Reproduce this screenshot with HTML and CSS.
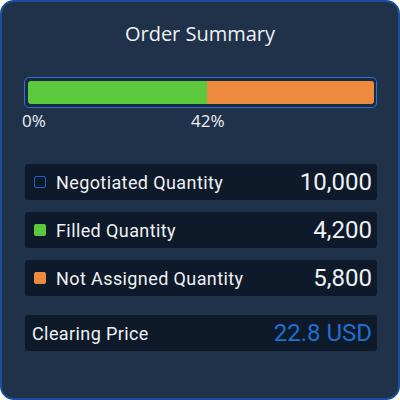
FILE: index.html
```html
<!DOCTYPE html>
<html lang="en">
<head>
    <meta charset="UTF-8">
    <meta name="viewport" content="width=device-width, initial-scale=1.0">
    <title>Order Summary</title>
    <link rel="stylesheet" href="styles.css">
</head>
<body>
    <div class="card">
        <h2 class="title">Order Summary</h2>

        <div class="bar">
            <div class="bar-filled" style="width: 51.7%;"></div>
            <div class="bar-rest"></div>
        </div>
        <div class="bar-labels">
            <span class="bar-label">0%</span>
            <span class="bar-label mark" style="left: 169px;">42%</span>
        </div>

        <div class="rows">
            <div class="row">
                <span class="swatch outline"></span>
                <span class="row-name">Negotiated Quantity</span>
                <span class="row-value">10,000</span>
            </div>
            <div class="row">
                <span class="swatch green"></span>
                <span class="row-name">Filled Quantity</span>
                <span class="row-value">4,200</span>
            </div>
            <div class="row">
                <span class="swatch orange"></span>
                <span class="row-name">Not Assigned Quantity</span>
                <span class="row-value">5,800</span>
            </div>
            <div class="row price">
                <span class="row-name">Clearing Price</span>
                <span class="row-value">22.8 USD</span>
            </div>
        </div>
    </div>
</body>
</html>
```

FILE: styles.css
```css
body {
    margin: 0;
    background: #ffffff;
    font-family: Roboto, "Liberation Sans", sans-serif;
}
.card {
    width: 400px;
    height: 400px;
    box-sizing: border-box;
    border: 2px solid #1a4d9b;
    border-radius: 14px;
    background-color: #1f3249;
    color: #eef1f5;
}
.title {
    margin: 18px 0 0;
    font-family: "Open Sans", Lato, sans-serif;
    font-weight: 400;
    font-size: 20px;
    line-height: 28px;
    text-align: center;
}
.bar {
    display: flex;
    height: 31px;
    box-sizing: border-box;
    margin: 29px 21px 0 22px;
    padding: 3px 2px 3px 3px;
    border: 1px solid #2a70d6;
    border-radius: 5px;
    background-color: #1a2a40;
}
.bar-filled {
    background-color: #5cc83e;
    border-radius: 3px 0 0 3px;
}
.bar-rest {
    flex: 1;
    background-color: #ed8a3d;
    border-radius: 0 3px 3px 0;
}
.bar-labels {
    position: relative;
    height: 22px;
    margin: 2px 0 0 20px;
}
.bar-label {
    font-family: "Open Sans", Lato, sans-serif;
    font-size: 17px;
    line-height: 22px;
}
.bar-label.mark {
    position: absolute;
    top: 0;
}
.rows {
    display: flex;
    flex-direction: column;
    gap: 12px;
    margin: 32px 21px 0 23px;
}
.row {
    display: flex;
    align-items: center;
    height: 36px;
    padding: 0 5px 0 9px;
    background-color: #0e1a29;
    border-radius: 3px;
}
.row.price {
    margin-top: 7px;
    padding-left: 7px;
}
.swatch {
    width: 12px;
    height: 12px;
    box-sizing: border-box;
    margin-right: 10px;
    border-radius: 2px;
}
.swatch.outline {
    border: 1.5px solid #2260c2;
}
.swatch.green {
    background-color: #5cc83e;
}
.swatch.orange {
    background-color: #ed8a3d;
}
.row-name {
    flex: 1;
    font-size: 18px;
    letter-spacing: 0.4px;
}
.row-value {
    font-size: 24px;
}
.row.price .row-value {
    color: #1f6fd1;
}
```
